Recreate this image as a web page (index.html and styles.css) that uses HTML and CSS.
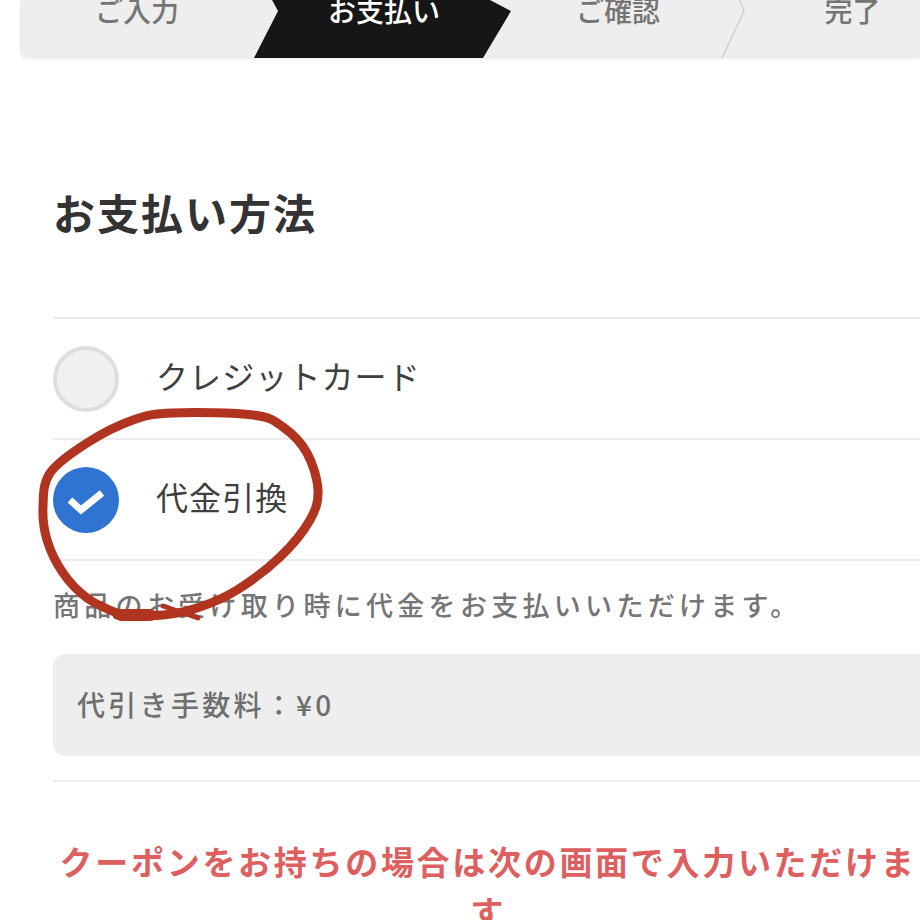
FILE: index.html
```html
<!DOCTYPE html>
<html lang="ja">
<head>
<meta charset="utf-8">
<title>お支払い方法</title>
<link rel="stylesheet" href="styles.css">
</head>
<body>
<div class="page">
  <nav class="stepper">
    <div class="step step-one"><span>ご入力</span></div>
    <div class="step step-two"><span>お支払い</span></div>
    <div class="step step-three"><span>ご確認</span></div>
    <div class="step step-four"><span>完了</span></div>
    <svg class="chevron" viewBox="0 0 40 58" width="40" height="58" aria-hidden="true"><path d="M16 -10 L24 11 L2 58" fill="none" stroke="#cfcfcf" stroke-width="1.5"/></svg>
  </nav>
  <main class="content">
    <h1 class="title">お支払い方法</h1>
    <ul class="options">
      <li class="option">
        <span class="radio"></span>
        <span class="option-label">クレジットカード</span>
      </li>
      <li class="option">
        <span class="radio radio-on">
          <svg viewBox="0 0 66 66" width="66" height="66" aria-hidden="true"><path d="M17 33 L28 43 L49 26" fill="none" stroke="#fff" stroke-width="7"/></svg>
        </span>
        <span class="option-label">代金引換</span>
      </li>
    </ul>
    <p class="desc">商品のお受け取り時に代金をお支払いいただけます。</p>
    <div class="fee"><span class="fee-text">代引き手数料：¥0</span></div>
    <p class="notice">クーポンをお持ちの場合は次の画面で入力いただけます</p>
  </main>
  <svg class="scribble" viewBox="0 0 920 920" width="920" height="920" aria-hidden="true">
    <path class="scribble-line" d="M117 613 C112 611 96 604.7 87 598 C78 591.3 69.7 582.7 63 573 C56.3 563.3 50.3 551 47 540 C43.7 529 42.5 518.2 43 507 C43.5 495.8 42.7 483.7 50 473 C57.3 462.3 73.2 451.8 87 443 C100.8 434.2 118.7 425 133 420 C147.3 415 153 413.8 173 413 C193 412.2 234.7 412.7 253 415 C271.3 417.3 274 420.7 283 427 C292 433.3 301.2 442.5 307 453 C312.8 463.5 317.5 478.8 318 490 C318.5 501.2 316.3 508.8 310 520 C303.7 531.2 292.2 545.3 280 557 C267.8 568.7 250.3 581.7 237 590 C223.7 598.3 212.3 602.8 200 607 C187.7 611.2 176.8 613.7 163 615 C149.2 616.3 130 616 117 615"/>
    <path class="scribble-line scribble-thin" d="M163 606 L198 618"/>
    <path class="scribble-line scribble-blob" d="M121 615 L150 615"/>
  </svg>
</div>
</body>
</html>
```
FILE: styles.css
```css
* { box-sizing: border-box; }
html, body { margin: 0; padding: 0; background: #fff; }
body {
  font-family: "Noto Sans CJK JP", "Noto Sans", sans-serif;
  color: #333;
}
.page {
  position: relative;
  width: 920px;
  height: 920px;
  overflow: hidden;
}
.stepper {
  position: relative;
  display: flex;
  height: 58px;
  margin-left: 20px;
  width: 900px;
  background: #eeeeee;
  border-radius: 0 0 0 8px;
  box-shadow: 0 1px 2px rgba(0,0,0,.08);
  font-size: 28px;
  font-weight: 500;
  color: #757575;
  overflow: hidden;
}
.step {
  display: flex;
  justify-content: center;
  align-items: flex-start;
  line-height: 26px;
}
.step span { margin-top: -3px; }
.step-one { width: 234px; }
.step-two {
  width: 257px;
  padding-left: 3px;
  background: #161616;
  color: #fff;
  clip-path: polygon(18px 0, 236px 0, 257px 11px, 229px 58px, 0 58px, 24px 11px);
}
.step-three { width: 214px; }
.step-four { width: 195px; padding-left: 60px; }
.chevron {
  position: absolute;
  left: 700px;
  top: 0;
}
.content {
  padding: 0 0 0 53px;
}
.title {
  margin: 126px 0 0;
  font-size: 42px;
  line-height: 56px;
  font-weight: 700;
  letter-spacing: 2px;
  color: #333;
}
.options {
  list-style: none;
  margin: 77px 0 0;
  padding: 0;
  border-top: 2px solid #ececec;
}
.option {
  display: flex;
  align-items: center;
  gap: 37px;
  height: 121px;
  border-bottom: 2px solid #ececec;
  font-size: 32px;
  letter-spacing: 1.1px;
  color: #3f3f3f;
  font-weight: 400;
}
.option-label { margin-bottom: 8px; }
.radio {
  flex: none;
  width: 66px;
  height: 66px;
  border-radius: 50%;
  background: #f0f0f0;
  border: 4px solid #dedede;
}
.radio-on {
  background: #2f74d0;
  border: 0;
}
.radio-on svg { display: block; }
.desc {
  margin: 24px 0 0;
  font-size: 27px;
  line-height: 40px;
  letter-spacing: 4.3px;
  color: #757575;
  white-space: nowrap;
  font-weight: 500;
}
.fee {
  margin-top: 29px;
  height: 102px;
  padding: 0 0 0 24px;
  display: flex;
  align-items: center;
  background: #eeeeee;
  border-radius: 12px 0 0 12px;
  font-size: 28px;
  font-weight: 500;
  letter-spacing: 3.3px;
  color: #6f6f6f;
}
.fee-text { margin-bottom: 3px; }
.notice {
  width: 870px;
  margin: 24px 0 0;
  padding: 56px 0 0;
  text-align: center;
  font-size: 33px;
  line-height: 50px;
  font-weight: 700;
  letter-spacing: 2.7px;
  color: #dd5f5f;
  position: relative;
}
.notice::before {
  content: "";
  position: absolute;
  left: 0;
  right: -10px;
  top: 0;
  border-top: 2px solid #ececec;
}
.scribble {
  position: absolute;
  left: 0;
  top: 0;
  pointer-events: none;
}
.scribble-line {
  fill: none;
  stroke: #b03420;
  stroke-width: 9;
  stroke-linecap: round;
  stroke-linejoin: round;
}
.scribble-thin { stroke-width: 5; }
.scribble-blob { stroke-width: 12; }
```
